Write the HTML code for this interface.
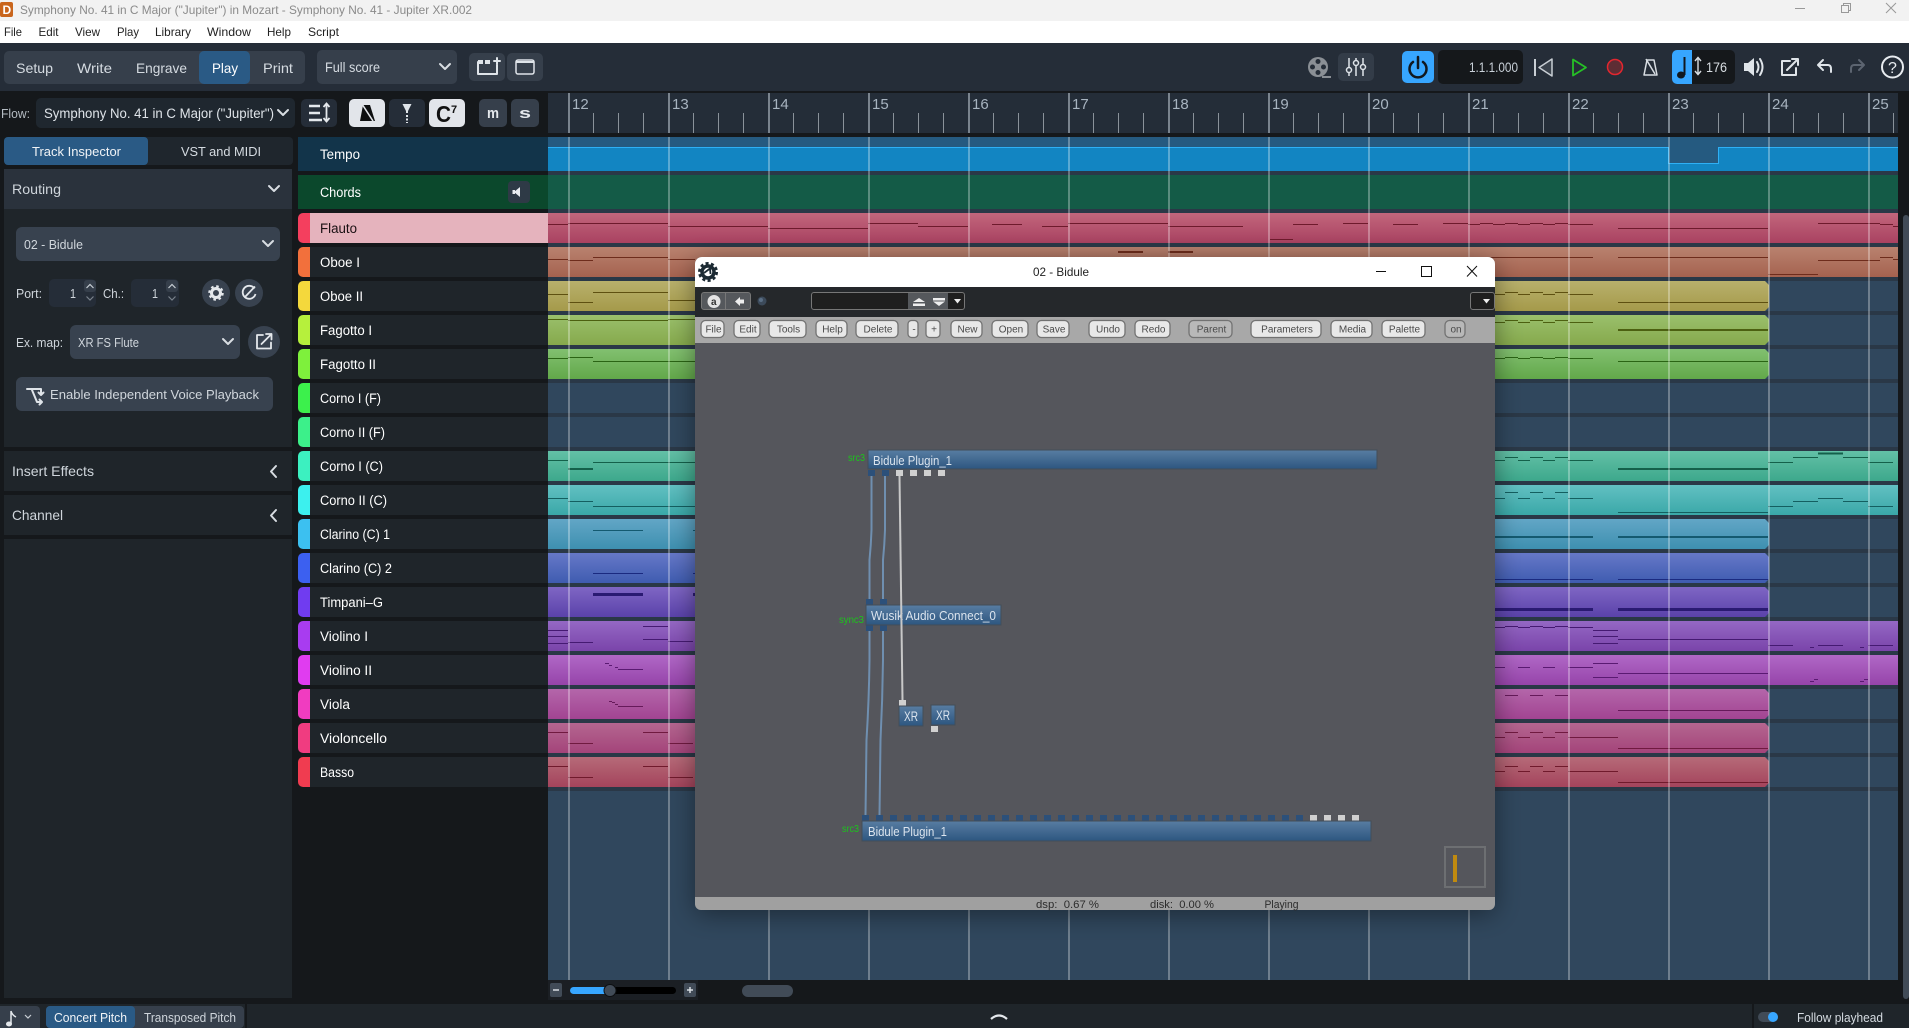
<!DOCTYPE html>
<html lang="en">
<head>
<meta charset="utf-8">
<title>Symphony No. 41 in C Major ("Jupiter") - Jupiter XR.002</title>
<style>
html,body{margin:0;padding:0;width:1909px;height:1028px;overflow:hidden;background:#15181b}
svg{display:block;position:absolute;left:0;top:0}
text{font-family:"Liberation Sans",sans-serif;white-space:pre}
.tb{font-size:14px;fill:#d5dbe1}
.tr{font-size:13.5px;fill:#fff}
.ins{font-size:13px;fill:#d0d6dc}
.hd{font-size:14px;fill:#cfd5db}
.bar{font-size:15px;fill:#a8b4c0}
.b{font-size:10px;fill:#4a4a4a;text-anchor:middle;transform:translateX(1px)}
.n{font-size:13px;fill:#dbe4ee}
.x{font-size:14px;fill:#dbe4ee}
.g{font-size:10px;fill:#1cc41c}
.st{font-size:11px;fill:#2c2c2c}
.ch{fill:none;stroke:#d8dde2;stroke-width:2;stroke-linecap:round;stroke-linejoin:round}
.ic{fill:none;stroke:#dfe4e9;stroke-width:2;stroke-linecap:round;stroke-linejoin:round}
.btn{fill:#e8e8e8;stroke:#727272;stroke-width:1.3}
</style>
</head>
<body>
<svg width="1909" height="1028" viewBox="0 0 1909 1028" xmlns="http://www.w3.org/2000/svg">
<defs>
<linearGradient id="g0" x1="0" y1="0" x2="0" y2="1"><stop offset="0" stop-color="#c2667c"/><stop offset="1" stop-color="#a94261"/></linearGradient>
<linearGradient id="g1" x1="0" y1="0" x2="0" y2="1"><stop offset="0" stop-color="#b9826f"/><stop offset="1" stop-color="#a5624f"/></linearGradient>
<linearGradient id="g2" x1="0" y1="0" x2="0" y2="1"><stop offset="0" stop-color="#b8b06c"/><stop offset="1" stop-color="#a59a4a"/></linearGradient>
<linearGradient id="g3" x1="0" y1="0" x2="0" y2="1"><stop offset="0" stop-color="#9ac06c"/><stop offset="1" stop-color="#86a94c"/></linearGradient>
<linearGradient id="g4" x1="0" y1="0" x2="0" y2="1"><stop offset="0" stop-color="#82c070"/><stop offset="1" stop-color="#62a84a"/></linearGradient>
<linearGradient id="g7" x1="0" y1="0" x2="0" y2="1"><stop offset="0" stop-color="#63c0a6"/><stop offset="1" stop-color="#3da88c"/></linearGradient>
<linearGradient id="g8" x1="0" y1="0" x2="0" y2="1"><stop offset="0" stop-color="#62c0c2"/><stop offset="1" stop-color="#3aa8a8"/></linearGradient>
<linearGradient id="g9" x1="0" y1="0" x2="0" y2="1"><stop offset="0" stop-color="#62a6c6"/><stop offset="1" stop-color="#3e90b0"/></linearGradient>
<linearGradient id="g10" x1="0" y1="0" x2="0" y2="1"><stop offset="0" stop-color="#6678c8"/><stop offset="1" stop-color="#3f5cb0"/></linearGradient>
<linearGradient id="g11" x1="0" y1="0" x2="0" y2="1"><stop offset="0" stop-color="#7f66c4"/><stop offset="1" stop-color="#5a42aa"/></linearGradient>
<linearGradient id="g12" x1="0" y1="0" x2="0" y2="1"><stop offset="0" stop-color="#9468c4"/><stop offset="1" stop-color="#7a44aa"/></linearGradient>
<linearGradient id="g13" x1="0" y1="0" x2="0" y2="1"><stop offset="0" stop-color="#b068c6"/><stop offset="1" stop-color="#9644aa"/></linearGradient>
<linearGradient id="g14" x1="0" y1="0" x2="0" y2="1"><stop offset="0" stop-color="#b466aa"/><stop offset="1" stop-color="#a24492"/></linearGradient>
<linearGradient id="g15" x1="0" y1="0" x2="0" y2="1"><stop offset="0" stop-color="#b46690"/><stop offset="1" stop-color="#a4447a"/></linearGradient>
<linearGradient id="g16" x1="0" y1="0" x2="0" y2="1"><stop offset="0" stop-color="#b66a78"/><stop offset="1" stop-color="#a4445c"/></linearGradient>
<linearGradient id="blk" x1="0" y1="0" x2="0" y2="1"><stop offset="0" stop-color="#587da2"/><stop offset="1" stop-color="#2d5680"/></linearGradient>
<pattern id="ticks" patternUnits="userSpaceOnUse" x="568" y="113" width="100" height="20"><path d="M25.5 0V20M50.5 0V20M75.5 0V20" stroke="#8a929a" stroke-width="1"/></pattern>
<pattern id="barsR" patternUnits="userSpaceOnUse" x="568" y="93" width="100" height="40"><rect width="2" height="40" fill="#7a848e"/></pattern>
<pattern id="bars" patternUnits="userSpaceOnUse" x="568" y="137" width="100" height="843"><rect width="2" height="843" fill="#fff" fill-opacity=".3"/></pattern>
<filter id="sh" x="-10%" y="-10%" width="120%" height="120%"><feDropShadow dx="0" dy="4" stdDeviation="13" flood-color="#000" flood-opacity=".42"/></filter>
</defs>

<!-- title bar -->
<rect width="1909" height="21" fill="#f2f2f2"/>
<rect x="0" y="2" width="13" height="15" rx="2" fill="#c9651c"/>
<text x="2.500" y="14" font-size="12" font-weight="700" fill="#fff">D</text>
<text x="20" y="14" font-size="12" fill="#8a8a8a" textLength="452" lengthAdjust="spacingAndGlyphs">Symphony No. 41 in C Major ("Jupiter") in Mozart - Symphony No. 41 - Jupiter XR.002</text>
<path d="M1795 8.500H1805" stroke="#999" stroke-width="1"/>
<path d="M1841.500 5.500H1848.500V12.500H1841.500ZM1843.500 5.500V3.500H1850.500V10.500H1848.500" fill="none" stroke="#999" stroke-width="1"/>
<path d="M1886 3L1896 13M1896 3L1886 13" stroke="#999" stroke-width="1"/>

<!-- menu -->
<rect y="21" width="1909" height="22" fill="#fff"/>
<g font-size="12" fill="#222">
<text x="4" y="36" textLength="18" lengthAdjust="spacingAndGlyphs">File</text>
<text x="38.500" y="36" textLength="20" lengthAdjust="spacingAndGlyphs">Edit</text>
<text x="75" y="36" textLength="25" lengthAdjust="spacingAndGlyphs">View</text>
<text x="117" y="36" textLength="22" lengthAdjust="spacingAndGlyphs">Play</text>
<text x="155" y="36" textLength="36" lengthAdjust="spacingAndGlyphs">Library</text>
<text x="207" y="36" textLength="44" lengthAdjust="spacingAndGlyphs">Window</text>
<text x="267" y="36" textLength="24" lengthAdjust="spacingAndGlyphs">Help</text>
<text x="308" y="36" textLength="31" lengthAdjust="spacingAndGlyphs">Script</text>
</g>

<!-- toolbar -->
<rect y="43" width="1909" height="48" fill="#252d38"/>
<rect x="4" y="51" width="301" height="33" rx="5" fill="#363f4b"/>
<rect x="199" y="51" width="51" height="33" rx="5" fill="#2a5a85"/>
<g class="tb">
<text x="16" y="73" textLength="37" lengthAdjust="spacingAndGlyphs">Setup</text>
<text x="77" y="73" textLength="35" lengthAdjust="spacingAndGlyphs">Write</text>
<text x="136" y="73" textLength="51" lengthAdjust="spacingAndGlyphs">Engrave</text>
<text x="212" y="73" textLength="26" lengthAdjust="spacingAndGlyphs" fill="#fff">Play</text>
<text x="263" y="73" textLength="30" lengthAdjust="spacingAndGlyphs">Print</text>
</g>
<rect x="317" y="50" width="140" height="34" rx="5" fill="#363f4b"/>
<text x="325" y="72" font-size="13.500" fill="#d5dbe1" textLength="55" lengthAdjust="spacingAndGlyphs">Full score</text>
<path class="ch" d="M440 64L445 69L450 64"/>
<rect x="469" y="53" width="36" height="28" rx="5" fill="#363f4b"/>
<rect x="507" y="53" width="36" height="28" rx="5" fill="#363f4b"/>
<path class="ic" d="M478 62V74H497V65" stroke-width="1.500"/>
<rect x="478" y="60" width="5" height="4" fill="#dfe4e9"/><rect x="485" y="60" width="5" height="4" fill="#dfe4e9"/>
<path class="ic" d="M494 61H500M497 58V64" stroke-width="1.500"/>
<rect x="516" y="60" width="18" height="14" rx="2" fill="none" stroke="#dfe4e9" stroke-width="1.500"/>
<path d="M516 62H534" stroke="#dfe4e9" stroke-width="2"/>

<!-- right toolbar icons -->
<circle cx="1318" cy="67" r="10" fill="#8a8f95"/>
<circle cx="1318" cy="61.500" r="2.500" fill="#252d38"/><circle cx="1318" cy="72.500" r="2.500" fill="#252d38"/><circle cx="1312.500" cy="67" r="2.500" fill="#252d38"/><circle cx="1323.500" cy="67" r="2.500" fill="#252d38"/>
<path d="M1322 77H1331" stroke="#8a8f95" stroke-width="2"/>
<rect x="1338" y="53" width="36" height="28" rx="5" fill="#333c48"/>
<path d="M1349 58V76M1356 58V76M1363 58V76" stroke="#dfe4e9" stroke-width="1.500"/>
<circle cx="1349" cy="70" r="2.500" fill="#333c48" stroke="#dfe4e9" stroke-width="1.500"/><circle cx="1356" cy="63" r="2.500" fill="#333c48" stroke="#dfe4e9" stroke-width="1.500"/><circle cx="1363" cy="67" r="2.500" fill="#333c48" stroke="#dfe4e9" stroke-width="1.500"/>
<rect x="1402" y="51" width="32" height="32" rx="5" fill="#37a6ff"/>
<path d="M1413 62A8.500 8.500 0 1 0 1423 62" fill="none" stroke="#11181f" stroke-width="2.500" stroke-linecap="round"/><path d="M1418 57V68" stroke="#11181f" stroke-width="2.500" stroke-linecap="round"/>
<rect x="1438" y="50" width="85" height="34" rx="5" fill="#15181b"/>
<text x="1469" y="72" font-size="14" fill="#c8d0d8" textLength="49" lengthAdjust="spacingAndGlyphs">1.1.1.000</text>
<path d="M1535 59V76" stroke="#c8ced4" stroke-width="2"/><path d="M1552 59V76L1539 67.500Z" fill="#3a424c" stroke="#c8ced4" stroke-width="1.500" stroke-linejoin="round"/>
<path d="M1573 59.500L1586 67.500L1573 75.500Z" fill="none" stroke="#26c026" stroke-width="1.800" stroke-linejoin="round"/>
<circle cx="1615" cy="67" r="7.500" fill="#5e2d34" stroke="#e3262f" stroke-width="1.500"/>
<path d="M1647 60H1654L1657 75H1644Z" fill="none" stroke="#d8dde2" stroke-width="1.500" stroke-linejoin="round"/><path d="M1646 59L1655 74" stroke="#d8dde2" stroke-width="1.500"/>
<rect x="1672" y="50" width="63" height="34" rx="5" fill="#15181b"/>
<path d="M1677 50H1692V84H1677A5 5 0 0 1 1672 79V55A5 5 0 0 1 1677 50Z" fill="#37a6ff"/>
<ellipse cx="1681" cy="75" rx="4" ry="3.500" fill="#11181f"/><path d="M1684.500 75V57" stroke="#11181f" stroke-width="2"/>
<path d="M1698 58V74M1695 61L1698 57.500L1701 61M1695 71L1698 74.500L1701 71" fill="none" stroke="#d8dde2" stroke-width="1.400"/>
<text x="1706" y="72" font-size="14" fill="#d8dde2" textLength="21" lengthAdjust="spacingAndGlyphs">176</text>
<path d="M1744 63H1748L1754 58V76L1748 71H1744Z" fill="#dfe4e9"/><path class="ic" d="M1757 62Q1760 67 1757 72M1760 59Q1765 67 1760 75" stroke-width="1.500"/>
<path class="ic" d="M1790 61H1782V75H1796V68M1787 70L1798 59M1792 59H1798V65"/>
<path class="ic" d="M1823 60L1818 65L1823 70M1818 65H1828Q1831 65 1831 69V72"/>
<path d="M1859 60L1864 65L1859 70M1864 65H1854Q1851 65 1851 69V72" fill="none" stroke="#5c6470" stroke-width="2" stroke-linecap="round" stroke-linejoin="round"/>
<circle cx="1892.500" cy="67" r="10.500" fill="none" stroke="#e8ecf0" stroke-width="2"/>
<text x="1888" y="73" font-size="16" fill="#e8ecf0">?</text>

<!-- flow row -->
<rect y="91" width="1909" height="2" fill="#15181b"/>
<rect y="93" width="548" height="40" fill="#15181b"/>
<text x="1" y="118" font-size="13" fill="#b5bcc3" textLength="29" lengthAdjust="spacingAndGlyphs">Flow:</text>
<rect x="36" y="98" width="259" height="30" rx="5" fill="#1f272f"/>
<text x="44" y="118" font-size="13.500" fill="#dfe4e9" textLength="230" lengthAdjust="spacingAndGlyphs">Symphony No. 41 in C Major ("Jupiter")</text>
<path class="ch" d="M278 110L283 115L288 110"/>
<rect x="301" y="99" width="36" height="28" rx="5" fill="#252d38"/>
<path d="M309 106H320M309 113H320M309 120H322" stroke="#e4e8ec" stroke-width="2.600"/>
<path d="M326.500 104V121M323.500 107L326.500 103.500L329.500 107M323.500 118L326.500 121.500L329.500 118" fill="none" stroke="#e4e8ec" stroke-width="1.800"/>
<rect x="349" y="99" width="36" height="28" rx="5" fill="#e2e5ea"/>
<path d="M363 105H370L375 121H360Z" fill="#0e0f10"/><path d="M362 104L373 121" stroke="#e2e5ea" stroke-width="1.600"/>
<rect x="389" y="99" width="36" height="28" rx="5" fill="#252d38"/>
<path d="M402.500 104H411.500L408 111V113H406V111Z" fill="#dfe4e9"/><path d="M407 115V123" stroke="#dfe4e9" stroke-width="2" stroke-dasharray="2 1.500"/>
<rect x="429" y="99" width="36" height="28" rx="5" fill="#e2e5ea"/>
<text x="436" y="122" font-size="23" font-weight="700" fill="#111" textLength="15" lengthAdjust="spacingAndGlyphs">C</text>
<text x="451" y="113" font-size="11" font-weight="700" fill="#111">7</text>
<rect x="479" y="99" width="28" height="28" rx="5" fill="#363f4b"/>
<rect x="511" y="99" width="28" height="28" rx="5" fill="#363f4b"/>
<text x="487" y="118" font-size="15" font-weight="700" fill="#e4e8ec" textLength="12" lengthAdjust="spacingAndGlyphs">m</text>
<text x="519" y="118" font-size="15" font-weight="700" fill="#e4e8ec" textLength="12" lengthAdjust="spacingAndGlyphs">s</text>

<!-- ruler -->
<rect x="548" y="93" width="1350" height="40" fill="#242d38"/>
<rect x="568" y="113" width="1330" height="20" fill="url(#ticks)"/>
<rect x="568" y="93" width="1330" height="40" fill="url(#barsR)"/>
<g class="bar">
<text x="572" y="109">12</text><text x="672" y="109">13</text><text x="772" y="109">14</text><text x="872" y="109">15</text><text x="972" y="109">16</text><text x="1072" y="109">17</text><text x="1172" y="109">18</text><text x="1272" y="109">19</text><text x="1372" y="109">20</text><text x="1472" y="109">21</text><text x="1572" y="109">22</text><text x="1672" y="109">23</text><text x="1772" y="109">24</text><text x="1872" y="109">25</text>
</g>

<!-- arrangement -->
<rect x="548" y="137" width="1350" height="843" fill="#30475d"/>
<path fill="#2a3847" d="M548 171h1350v4H548zM548 209h1350v4H548zM548 243h1350v4H548zM548 277h1350v4H548zM548 311h1350v4H548zM548 345h1350v4H548zM548 379h1350v4H548zM548 413h1350v4H548zM548 447h1350v4H548zM548 481h1350v4H548zM548 515h1350v4H548zM548 549h1350v4H548zM548 583h1350v4H548zM548 617h1350v4H548zM548 651h1350v4H548zM548 685h1350v4H548zM548 719h1350v4H548zM548 753h1350v4H548zM548 787h1350v4H548z"/>
<rect x="548" y="137" width="1350" height="34" fill="#255a80"/>
<path d="M548 147H1668V163H1718V147H1898V171H548Z" fill="#1285c2"/>
<path d="M548 147.500H1668.500V163.500H1718.500V147.500H1898" fill="none" stroke="#2eb0f5" stroke-width="1"/>
<rect x="548" y="175" width="1350" height="34" fill="#145b47"/>
<!-- clips -->
<rect x="548" y="213" width="1350" height="30" fill="url(#g0)"/>
<rect x="548" y="247" width="1350" height="30" fill="url(#g1)"/>
<path d="M548 281H1765L1769 285V307L1765 311H548Z" fill="url(#g2)"/>
<path d="M548 315H1765L1769 319V341L1765 345H548Z" fill="url(#g3)"/>
<path d="M548 349H1765L1769 353V375L1765 379H548Z" fill="url(#g4)"/>
<rect x="548" y="451" width="1350" height="30" fill="url(#g7)"/>
<rect x="548" y="485" width="1350" height="30" fill="url(#g8)"/>
<path d="M548 519H1765L1769 523V545L1765 549H548Z" fill="url(#g9)"/>
<path d="M548 553H1765L1769 557V579L1765 583H548Z" fill="url(#g10)"/>
<path d="M548 587H1765L1769 591V613L1765 617H548Z" fill="url(#g11)"/>
<rect x="548" y="621" width="1350" height="30" fill="url(#g12)"/>
<rect x="548" y="655" width="1350" height="30" fill="url(#g13)"/>
<path d="M548 689H1765L1769 693V715L1765 719H548Z" fill="url(#g14)"/>
<path d="M548 723H1765L1769 727V749L1765 753H548Z" fill="url(#g15)"/>
<path d="M548 757H1765L1769 761V783L1765 787H548Z" fill="url(#g16)"/>
<!-- notes -->
<g fill="none" stroke-width="1">
<path stroke="#6e1a2c" d="M548 224.500H568M568 223.500H668M668 226.500H768M768 228.500H868M868 223.500H918M918 226.500H968M992 224.500H1022M1042 226.500H1068M1068 223.500H1168M1168 226.500H1243M1270 239.500H1293M1293 224.500H1318M1343 223.500H1368M1393 224.500H1418M1443 223.500H1468M1468 224.500H1480M1480 223.500H1493M1493 224.500H1505M1505 223.500H1518M1518 224.500H1530M1530 223.500H1543M1543 224.500H1555M1555 223.500H1568M1568 224.500H1593M1618 228.500H1768M1818 223.500H1880M1880 224.500H1893M1893 226.500H1898"/>
<path stroke="#6e2c1c" d="M548 259.500H568M568 260.500H593M593 257.500H668M668 259.500H695M1490 257.500H1593M1618 257.500H1768M1768 274.500H1818M1818 260.500H1880M1880 257.500H1893M1893 259.500H1898"/>
<path stroke="#6e2c1c" stroke-width="2" d="M1118 252H1143M1168 252H1193"/>
<path stroke="#5e5010" d="M548 294.500H568M568 302.500H593M593 292.500H668M668 300.500H695M1495 294.500H1505M1505 292.500H1518M1518 294.500H1530M1530 292.500H1543M1543 294.500H1555M1555 292.500H1568M1568 294.500H1593M1618 302.500H1768"/>
<path stroke="#4c6010" d="M548 319.500H568M568 320.500H668M668 319.500H695M1495 322.500H1505M1505 320.500H1518M1518 322.500H1530M1530 320.500H1543M1543 322.500H1555M1555 320.500H1568M1568 322.500H1593"/>
<path stroke="#4c6010" stroke-width="2" d="M1618 330H1768"/>
<path stroke="#2a6414" d="M548 358.500H568M568 357.500H593M593 361.500H695M1495 358.500H1505M1505 357.500H1518M1518 358.500H1530M1530 357.500H1543M1543 358.500H1555M1555 357.500H1568M1568 358.500H1593M1618 361.500H1768"/>
<path stroke="#14604a" d="M548 460.500H568M593 462.500H695M1495 460.500H1505M1505 457.500H1518M1518 460.500H1530M1530 457.500H1543M1543 460.500H1555M1555 457.500H1568M1568 460.500H1593M1768 462.500H1793M1793 457.500H1818M1843 457.500H1868M1868 462.500H1893"/>
<path stroke="#14604a" stroke-width="2" d="M568 469H593M1618 469H1768M1818 453.500H1843"/>
<path stroke="#145f60" d="M548 498.500H568M568 501.500H593M593 506.500H695M1495 498.500H1505M1505 492.500H1518M1518 498.500H1530M1530 492.500H1543M1543 498.500H1555M1555 492.500H1568M1568 498.500H1593M1618 512.500H1768M1768 506.500H1793M1793 501.500H1818M1818 498.500H1843M1843 501.500H1868M1868 506.500H1893"/>
<path stroke="#145a70" stroke-width="1" d="M593 530.500H643M693 530.500H695"/>
<path stroke="#145a70" stroke-width="2" d="M1495 537H1593M1618 537H1768"/>
<path stroke="#1a2a80" d="M593 573.500H643M693 573.500H695M1495 579.500H1593M1618 579.500H1768"/>
<path stroke="#2a1a72" stroke-width="3" d="M593 594.500H643M693 594.500H695M1495 609.500H1593M1618 609.500H1768"/>
<path stroke="#451a72" d="M548 630.500H568M548 636.500H568M548 643.500H568M568 642.500H593M643 626.500H668M643 639.500H668M668 641.500H693M1495 627.500H1505M1505 626.500H1518M1518 627.500H1530M1530 626.500H1543M1543 627.500H1555M1555 626.500H1568M1568 627.500H1593M1593 630.500H1618M1593 636.500H1618M1593 643.500H1618M1618 639.500H1768M1768 645.500H1793M1810 647.500H1814M1818 645.500H1843M1860 647.500H1864M1868 645.500H1893"/>
<path stroke="#5a1a72" d="M605 663.500H609M609 665.500H612M615 667.500H618M618 669.500H643M1495 667.500H1505M1518 667.500H1530M1543 667.500H1555M1568 667.500H1593M1593 663.500H1618M1593 677.500H1618M1618 673.500H1768M1810 681.500H1814M1814 679.500H1818M1860 681.500H1864M1864 679.500H1868"/>
<path stroke="#661a5a" d="M609 701.500H612M612 702.500H615M615 704.500H618M618 706.500H643M1505 695.500H1518M1530 695.500H1543M1555 695.500H1568M1618 710.500H1768"/>
<path stroke="#701a40" d="M548 732.500H568M568 743.500H593M643 732.500H668M668 743.500H693M1505 732.500H1518M1530 732.500H1543M1555 732.500H1568M1495 737.500H1505M1518 737.500H1530M1543 737.500H1555M1568 737.500H1618M1618 748.500H1768"/>
<path stroke="#701a2c" d="M548 766.500H568M568 777.500H593M643 766.500H668M668 777.500H693M1505 766.500H1518M1530 766.500H1543M1555 766.500H1568M1495 771.500H1505M1518 771.500H1530M1543 771.500H1555M1568 771.500H1618M1618 782.500H1768"/>
</g>
<rect x="568" y="137" width="1330" height="843" fill="url(#bars)"/>

<!-- right scrollbar -->
<rect x="1903" y="215" width="6" height="784" rx="3" fill="#414b57"/>

<!-- track headers -->
<path d="M298 137H548V171H298Z" fill="#12344a"/>
<path d="M298 175H548V209H298Z" fill="#0b482c"/>
<text x="320" y="159" class="tr" textLength="40" lengthAdjust="spacingAndGlyphs">Tempo</text>
<text x="320" y="197" class="tr" textLength="41" lengthAdjust="spacingAndGlyphs">Chords</text>
<rect x="508" y="181" width="22" height="22" rx="4" fill="#2e3a46"/>
<path d="M520 187V197L514 192Z" fill="#e8ecf0"/><rect x="512.500" y="190" width="2.500" height="4" fill="#e8ecf0"/>
<g fill="#1f252a">
<rect x="310" y="213" width="238" height="30" fill="#e5b3bd"/>
<rect x="310" y="247" width="238" height="30"/><rect x="310" y="281" width="238" height="30"/><rect x="310" y="315" width="238" height="30"/><rect x="310" y="349" width="238" height="30"/><rect x="310" y="383" width="238" height="30"/><rect x="310" y="417" width="238" height="30"/><rect x="310" y="451" width="238" height="30"/><rect x="310" y="485" width="238" height="30"/><rect x="310" y="519" width="238" height="30"/><rect x="310" y="553" width="238" height="30"/><rect x="310" y="587" width="238" height="30"/><rect x="310" y="621" width="238" height="30"/><rect x="310" y="655" width="238" height="30"/><rect x="310" y="689" width="238" height="30"/><rect x="310" y="723" width="238" height="30"/><rect x="310" y="757" width="238" height="30"/>
</g>
<path fill="#f43f5e" d="M310 213H303A5 5 0 0 0 298 218V238A5 5 0 0 0 303 243H310Z"/>
<path fill="#f2703c" d="M310 247H303A5 5 0 0 0 298 252V272A5 5 0 0 0 303 277H310Z"/>
<path fill="#f4d83c" d="M310 281H303A5 5 0 0 0 298 286V306A5 5 0 0 0 303 311H310Z"/>
<path fill="#b6f03c" d="M310 315H303A5 5 0 0 0 298 320V340A5 5 0 0 0 303 345H310Z"/>
<path fill="#7ef03c" d="M310 349H303A5 5 0 0 0 298 354V374A5 5 0 0 0 303 379H310Z"/>
<path fill="#3cf04c" d="M310 383H303A5 5 0 0 0 298 388V408A5 5 0 0 0 303 413H310Z"/>
<path fill="#3cf08a" d="M310 417H303A5 5 0 0 0 298 422V442A5 5 0 0 0 303 447H310Z"/>
<path fill="#3cf0c0" d="M310 451H303A5 5 0 0 0 298 456V476A5 5 0 0 0 303 481H310Z"/>
<path fill="#3cf0ee" d="M310 485H303A5 5 0 0 0 298 490V510A5 5 0 0 0 303 515H310Z"/>
<path fill="#3cc0f0" d="M310 519H303A5 5 0 0 0 298 524V544A5 5 0 0 0 303 549H310Z"/>
<path fill="#3c60f0" d="M310 553H303A5 5 0 0 0 298 558V578A5 5 0 0 0 303 583H310Z"/>
<path fill="#703cf0" d="M310 587H303A5 5 0 0 0 298 592V612A5 5 0 0 0 303 617H310Z"/>
<path fill="#a83cf0" d="M310 621H303A5 5 0 0 0 298 626V646A5 5 0 0 0 303 651H310Z"/>
<path fill="#e03cf0" d="M310 655H303A5 5 0 0 0 298 660V680A5 5 0 0 0 303 685H310Z"/>
<path fill="#f03cc0" d="M310 689H303A5 5 0 0 0 298 694V714A5 5 0 0 0 303 719H310Z"/>
<path fill="#f03c80" d="M310 723H303A5 5 0 0 0 298 728V748A5 5 0 0 0 303 753H310Z"/>
<path fill="#f03c50" d="M310 757H303A5 5 0 0 0 298 762V782A5 5 0 0 0 303 787H310Z"/>
<g class="tr">
<text x="320" y="233" style="fill:#1a1013" textLength="37" lengthAdjust="spacingAndGlyphs">Flauto</text>
<text x="320" y="267" textLength="40" lengthAdjust="spacingAndGlyphs">Oboe I</text>
<text x="320" y="301" textLength="43" lengthAdjust="spacingAndGlyphs">Oboe II</text>
<text x="320" y="335" textLength="52" lengthAdjust="spacingAndGlyphs">Fagotto I</text>
<text x="320" y="369" textLength="56" lengthAdjust="spacingAndGlyphs">Fagotto II</text>
<text x="320" y="403" textLength="61" lengthAdjust="spacingAndGlyphs">Corno I (F)</text>
<text x="320" y="437" textLength="65" lengthAdjust="spacingAndGlyphs">Corno II (F)</text>
<text x="320" y="471" textLength="63" lengthAdjust="spacingAndGlyphs">Corno I (C)</text>
<text x="320" y="505" textLength="67" lengthAdjust="spacingAndGlyphs">Corno II (C)</text>
<text x="320" y="539" textLength="70" lengthAdjust="spacingAndGlyphs">Clarino (C) 1</text>
<text x="320" y="573" textLength="72" lengthAdjust="spacingAndGlyphs">Clarino (C) 2</text>
<text x="320" y="607" textLength="63" lengthAdjust="spacingAndGlyphs">Timpani–G</text>
<text x="320" y="641" textLength="48" lengthAdjust="spacingAndGlyphs">Violino I</text>
<text x="320" y="675" textLength="52" lengthAdjust="spacingAndGlyphs">Violino II</text>
<text x="320" y="709" textLength="30" lengthAdjust="spacingAndGlyphs">Viola</text>
<text x="320" y="743" textLength="67" lengthAdjust="spacingAndGlyphs">Violoncello</text>
<text x="320" y="777" textLength="34" lengthAdjust="spacingAndGlyphs">Basso</text>
</g>

<!-- inspector -->
<rect x="4" y="137" width="289" height="28" rx="4" fill="#1f262d"/>
<rect x="4" y="137" width="144" height="28" rx="4" fill="#2a5a85"/>
<text x="32" y="156" font-size="13" fill="#f0f3f6" textLength="89" lengthAdjust="spacingAndGlyphs">Track Inspector</text>
<text x="181" y="156" font-size="13" fill="#d5dbe1" textLength="80" lengthAdjust="spacingAndGlyphs">VST and MIDI</text>
<rect x="4" y="169" width="288" height="40" fill="#2a323c"/>
<text x="12" y="194" class="hd" textLength="49" lengthAdjust="spacingAndGlyphs">Routing</text>
<path class="ch" d="M269 186L274 191L279 186"/>
<rect x="4" y="209" width="288" height="238" fill="#1f252a"/>
<rect x="16" y="227" width="264" height="34" rx="6" fill="#38424f"/>
<text x="24" y="249" class="ins" textLength="59" lengthAdjust="spacingAndGlyphs">02 - Bidule</text>
<path class="ch" d="M263 241L268 246L273 241"/>
<text x="16" y="298" class="ins" textLength="26" lengthAdjust="spacingAndGlyphs" fill="#b5bcc3">Port:</text>
<rect x="49" y="279" width="47" height="28" rx="5" fill="#252d38"/>
<text x="70" y="298" class="ins" textLength="6" lengthAdjust="spacingAndGlyphs">1</text>
<rect x="84" y="280" width="12" height="12" rx="3" fill="#363f4b"/>
<path d="M86.500 288L90 284.500L93.500 288" fill="none" stroke="#c8ced4" stroke-width="1.200"/><path d="M86.500 296.500L90 300L93.500 296.500" fill="none" stroke="#7a828c" stroke-width="1.200"/>
<text x="103" y="298" class="ins" textLength="21" lengthAdjust="spacingAndGlyphs" fill="#b5bcc3">Ch.:</text>
<rect x="131" y="279" width="48" height="28" rx="5" fill="#252d38"/>
<text x="152" y="298" class="ins" textLength="6" lengthAdjust="spacingAndGlyphs">1</text>
<rect x="166" y="280" width="12" height="12" rx="3" fill="#363f4b"/>
<path d="M168.500 288L172 284.500L175.500 288" fill="none" stroke="#c8ced4" stroke-width="1.200"/><path d="M168.500 296.500L172 300L175.500 296.500" fill="none" stroke="#7a828c" stroke-width="1.200"/>
<circle cx="216" cy="293" r="14" fill="#38424f"/>
<circle cx="216" cy="293" r="4.500" fill="none" stroke="#e4e8ec" stroke-width="3"/><circle cx="216" cy="293" r="6.500" fill="none" stroke="#e4e8ec" stroke-width="2.500" stroke-dasharray="2.500 2.600"/>
<circle cx="249" cy="293" r="14" fill="#38424f"/>
<path d="M254.500 288.500A6.500 6.500 0 1 0 255.500 294" fill="none" stroke="#e4e8ec" stroke-width="1.800"/><path d="M244.500 297.500L255 286.500" stroke="#e4e8ec" stroke-width="1.800"/>
<text x="16" y="347" class="ins" textLength="47" lengthAdjust="spacingAndGlyphs" fill="#b5bcc3">Ex. map:</text>
<rect x="70" y="325" width="170" height="34" rx="6" fill="#38424f"/>
<text x="78" y="347" font-size="12.500" fill="#d0d6dc" textLength="61" lengthAdjust="spacingAndGlyphs">XR FS Flute</text>
<path class="ch" d="M223 339L228 344L233 339"/>
<circle cx="264" cy="342" r="16" fill="#38424f"/>
<path d="M263 335H257V348.500H271V342.500M261.500 344L271.500 334M266 334H271.500V339.500" fill="none" stroke="#e4e8ec" stroke-width="1.800" stroke-linecap="round" stroke-linejoin="round"/>
<rect x="16" y="377" width="257" height="34" rx="6" fill="#38424f"/>
<path class="ic" d="M27 389H41V395M38.500 392.500L41 395L43.500 392.500M32 390L37 402H42M39.500 399.500L42 402L39.500 404.500" stroke-width="1.800"/>
<text x="50" y="399" class="ins" textLength="209" lengthAdjust="spacingAndGlyphs">Enable Independent Voice Playback</text>
<rect x="4" y="451" width="288" height="40" fill="#1f252a"/>
<text x="12" y="476" class="hd" textLength="82" lengthAdjust="spacingAndGlyphs">Insert Effects</text>
<path class="ch" d="M276 466L271 471.500L276 477"/>
<rect x="4" y="495" width="288" height="40" fill="#1f252a"/>
<text x="12" y="520" class="hd" textLength="51" lengthAdjust="spacingAndGlyphs">Channel</text>
<path class="ch" d="M276 510L271 515.500L276 521"/>
<rect x="4" y="539" width="288" height="459" fill="#1f252a"/>

<!-- zoom bar -->
<rect x="548" y="980" width="1350" height="20" fill="#15181b"/>
<rect x="548" y="980" width="150" height="20" fill="#1b1f24"/>
<rect x="550" y="983" width="12" height="14" rx="2" fill="#414b57"/>
<path d="M553 990H559" stroke="#d8dde2" stroke-width="1.500"/>
<rect x="570" y="987" width="106" height="7" rx="3.500" fill="#000"/>
<rect x="570" y="987" width="38" height="7" rx="3.500" fill="#37a6ff"/>
<circle cx="610" cy="990.500" r="6" fill="#414b57" stroke="#0d0f11" stroke-width="1"/>
<rect x="684" y="983" width="12" height="14" rx="2" fill="#414b57"/>
<path d="M687 990H693M690 987V993" stroke="#d8dde2" stroke-width="1.500"/>
<rect x="742" y="985" width="51" height="12" rx="6" fill="#414b57"/>

<!-- status bar -->
<rect y="1004" width="1909" height="24" fill="#1f252a"/>
<path d="M0 1006H36A4 4 0 0 1 40 1010V1028H0Z" fill="#363f4b"/>
<path d="M11 1024V1011Q12 1015 16 1017" fill="none" stroke="#e4e8ec" stroke-width="1.500"/><ellipse cx="9" cy="1024" rx="3" ry="2.500" fill="#e4e8ec"/>
<path d="M25 1015L28 1018L31 1015" fill="none" stroke="#c8ced4" stroke-width="1.200"/>
<rect x="46" y="1006" width="198" height="22" rx="4" fill="#363f4b"/>
<rect x="46" y="1006" width="89" height="22" rx="4" fill="#2a5a85"/>
<text x="54" y="1022" font-size="12.500" fill="#f0f3f6" textLength="73" lengthAdjust="spacingAndGlyphs">Concert Pitch</text>
<text x="144" y="1022" font-size="12.500" fill="#cfd5db" textLength="92" lengthAdjust="spacingAndGlyphs">Transposed Pitch</text>
<rect x="245" y="1004" width="2" height="24" fill="#15181b"/>
<path d="M991 1019Q999 1012 1007 1019" fill="none" stroke="#e4e8ec" stroke-width="2.200"/>
<rect x="1752" y="1004" width="2" height="24" fill="#15181b"/>
<rect x="1758" y="1012" width="20" height="10" rx="5" fill="#414b57"/>
<circle cx="1773" cy="1017" r="5" fill="#37a6ff"/>
<text x="1797" y="1022" font-size="12.500" fill="#d5dbe1" textLength="86" lengthAdjust="spacingAndGlyphs">Follow playhead</text>

<!-- Bidule window -->
<rect x="695" y="257" width="800" height="653" rx="7" fill="#54575b" filter="url(#sh)"/>
<path d="M702 257H1488A7 7 0 0 1 1495 264V287H695V264A7 7 0 0 1 702 257Z" fill="#fff"/>
<circle cx="708" cy="272" r="6" fill="#fff" stroke="#1c2a33" stroke-width="3.500"/>
<circle cx="708" cy="272" r="8.500" fill="none" stroke="#1c2a33" stroke-width="3" stroke-dasharray="3 2.340"/>
<path d="M704 273L710 268.500L710.500 274" fill="none" stroke="#1c2a33" stroke-width="1.800"/>
<text x="1033" y="276" font-size="12" fill="#222" textLength="56" lengthAdjust="spacingAndGlyphs">02 - Bidule</text>
<path d="M1376 271.500H1386" stroke="#111" stroke-width="1"/>
<rect x="1421.500" y="266.500" width="10" height="10" fill="none" stroke="#111" stroke-width="1"/>
<path d="M1467 266L1477 276.500M1477 266L1467 276.500" stroke="#111" stroke-width="1"/>
<rect x="695" y="287" width="800" height="30" fill="#25282b"/>
<rect x="701.500" y="292.500" width="49" height="17" rx="2.500" fill="#55585c" stroke="#777" stroke-width="1"/>
<path d="M725.500 292.500V309.500" stroke="#777" stroke-width="1"/>
<circle cx="714" cy="301.500" r="6.500" fill="#e4e4e4"/><text x="711" y="305" font-size="10" font-weight="700" fill="#333">a</text>
<path d="M735 301.500L740 297V299.500H744V303.500H740V306Z" fill="#eee"/>
<circle cx="762" cy="301" r="4.500" fill="#3c4a5a"/><circle cx="761" cy="300" r="2" fill="#5b6f85"/>
<rect x="811.500" y="292.500" width="153" height="17" rx="2.500" fill="#1f1f1f" stroke="#777" stroke-width="1"/>
<rect x="908" y="293" width="40" height="16" fill="#55585c"/>
<path d="M913 302L919 298L925 302ZM913 303.500H925V306H913Z" fill="#eee"/>
<path d="M933 298H945V300.500H933ZM933 301.500H945L939 306Z" fill="#eee"/>
<path d="M954 299H961L957.500 303.500Z" fill="#eee"/>
<rect x="1470.500" y="292.500" width="24" height="17" rx="2.500" fill="#1f1f1f" stroke="#777" stroke-width="1"/>
<path d="M1483 299H1490L1486.500 303.500Z" fill="#eee"/>
<rect x="695" y="317" width="800" height="26" fill="#a8a8a8"/>
<rect class="btn" x="701" y="320.500" width="23" height="17" rx="4.500"/><text class="b" x="712.500" y="332.500">File</text>
<rect class="btn" x="734" y="320.500" width="26" height="17" rx="4.500"/><text class="b" x="747" y="332.500">Edit</text>
<rect class="btn" x="769" y="320.500" width="37" height="17" rx="4.500"/><text class="b" x="787.500" y="332.500">Tools</text>
<rect class="btn" x="816" y="320.500" width="31" height="17" rx="4.500"/><text class="b" x="831.500" y="332.500">Help</text>
<rect class="btn" x="856" y="320.500" width="42" height="17" rx="4.500"/><text class="b" x="877" y="332.500">Delete</text>
<rect class="btn" x="908" y="320.500" width="10" height="17" rx="3.500"/><text class="b" x="913" y="332.500">-</text>
<rect class="btn" x="926" y="320.500" width="14" height="17" rx="3.500"/><text class="b" x="933" y="332.500">+</text>
<rect class="btn" x="951" y="320.500" width="31" height="17" rx="4.500"/><text class="b" x="966.500" y="332.500">New</text>
<rect class="btn" x="992" y="320.500" width="36" height="17" rx="4.500"/><text class="b" x="1010" y="332.500">Open</text>
<rect class="btn" x="1037" y="320.500" width="32" height="17" rx="4.500"/><text class="b" x="1053" y="332.500">Save</text>
<rect class="btn" x="1089" y="320.500" width="36" height="17" rx="4.500"/><text class="b" x="1107" y="332.500">Undo</text>
<rect class="btn" x="1135" y="320.500" width="35" height="17" rx="4.500"/><text class="b" x="1152.500" y="332.500">Redo</text>
<rect class="btn" x="1189" y="320.500" width="43" height="17" rx="4.500" style="fill:#b8b8b8"/><text class="b" x="1210.500" y="332.500">Parent</text>
<rect class="btn" x="1251" y="320.500" width="70" height="17" rx="4.500"/><text class="b" x="1286" y="332.500">Parameters</text>
<rect class="btn" x="1331" y="320.500" width="41" height="17" rx="4.500"/><text class="b" x="1351.500" y="332.500">Media</text>
<rect class="btn" x="1382" y="320.500" width="43" height="17" rx="4.500"/><text class="b" x="1403.500" y="332.500">Palette</text>
<rect class="btn" x="1445" y="320.500" width="20" height="17" rx="4.500" style="fill:#b8b8b8"/><text class="b" x="1455" y="332.500">on</text>

<!-- graph -->
<path d="M871.500 476V530Q871 545 869.500 560V599M885 476V530Q884.500 545 883 560V599" fill="none" stroke="#6f8fb0" stroke-width="2"/>
<path d="M869.500 631V660Q869 700 866.500 740L865.500 815M883 631V660Q882.500 700 880.500 740L879.500 815" fill="none" stroke="#6f8fb0" stroke-width="2"/>
<rect x="868" y="450" width="509" height="19" fill="url(#blk)" stroke="#434d57" stroke-width="1"/>
<text class="n" x="873" y="465" textLength="79" lengthAdjust="spacingAndGlyphs">Bidule Plugin_1</text>
<text class="g" x="848" y="461" textLength="17" lengthAdjust="spacingAndGlyphs">src3</text>
<path fill="#2c507a" d="M868 470h7v6h-7zM882 470h7v6h-7zM866 599h7v6h-7zM880 599h7v6h-7zM866 625h7v6h-7zM880 625h7v6h-7z"/>
<path fill="#d0d0d0" d="M896 470h7v6h-7zM910 470h7v6h-7zM924 470h7v6h-7zM938 470h7v6h-7zM899 700h7v6h-7zM931 726h7v6h-7z"/>
<rect x="866" y="605" width="135" height="20" fill="url(#blk)" stroke="#434d57" stroke-width="1"/>
<text class="n" x="871" y="620" textLength="125" lengthAdjust="spacingAndGlyphs">Wusik Audio Connect_0</text>
<text class="g" x="839" y="623" textLength="25" lengthAdjust="spacingAndGlyphs">sync3</text>
<path d="M899.500 476L902.500 700" fill="none" stroke="#c8c8c8" stroke-width="2"/>
<rect x="899" y="706" width="24" height="20" fill="url(#blk)" stroke="#434d57" stroke-width="1"/>
<text class="x" x="904" y="721" textLength="14" lengthAdjust="spacingAndGlyphs">XR</text>
<rect x="931" y="705" width="24" height="20" fill="url(#blk)" stroke="#434d57" stroke-width="1"/>
<text class="x" x="936" y="720" textLength="14" lengthAdjust="spacingAndGlyphs">XR</text>
<path fill="#2c507a" d="M862 815h7v6h-7zM876 815h7v6h-7zM890 815h7v6h-7zM904 815h7v6h-7zM918 815h7v6h-7zM932 815h7v6h-7zM946 815h7v6h-7zM960 815h7v6h-7zM974 815h7v6h-7zM988 815h7v6h-7zM1002 815h7v6h-7zM1016 815h7v6h-7zM1030 815h7v6h-7zM1044 815h7v6h-7zM1058 815h7v6h-7zM1072 815h7v6h-7zM1086 815h7v6h-7zM1100 815h7v6h-7zM1114 815h7v6h-7zM1128 815h7v6h-7zM1142 815h7v6h-7zM1156 815h7v6h-7zM1170 815h7v6h-7zM1184 815h7v6h-7zM1198 815h7v6h-7zM1212 815h7v6h-7zM1226 815h7v6h-7zM1240 815h7v6h-7zM1254 815h7v6h-7zM1268 815h7v6h-7zM1282 815h7v6h-7zM1296 815h7v6h-7z"/>
<path fill="#d0d0d0" d="M1310 815h7v6h-7zM1324 815h7v6h-7zM1338 815h7v6h-7zM1352 815h7v6h-7z"/>
<rect x="862" y="821" width="509" height="20" fill="url(#blk)" stroke="#434d57" stroke-width="1"/>
<text class="n" x="868" y="836" textLength="79" lengthAdjust="spacingAndGlyphs">Bidule Plugin_1</text>
<text class="g" x="842" y="832" textLength="17" lengthAdjust="spacingAndGlyphs">src3</text>
<rect x="1445" y="847" width="40" height="40" fill="none" stroke="#6d6f72" stroke-width="2"/>
<rect x="1453" y="855" width="4" height="27" fill="#c08a10"/>
<path d="M695 897H1495V904A6 6 0 0 1 1489 910H701A6 6 0 0 1 695 904Z" fill="#a0a0a0"/>
<text class="st" x="1036" y="908" textLength="63" lengthAdjust="spacingAndGlyphs">dsp:  0.67 %</text>
<text class="st" x="1150" y="908" textLength="64" lengthAdjust="spacingAndGlyphs">disk:  0.00 %</text>
<text class="st" x="1264.500" y="908" textLength="34" lengthAdjust="spacingAndGlyphs">Playing</text>
</svg>
</body>
</html>
